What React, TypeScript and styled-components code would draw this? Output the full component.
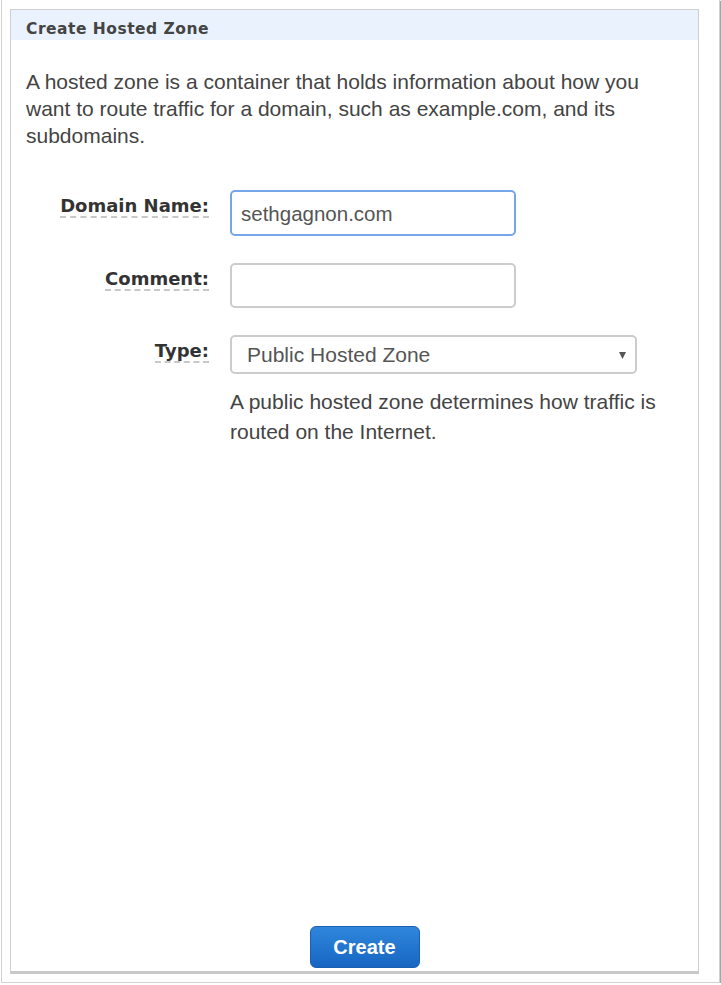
import React from "react";
import styled, { createGlobalStyle } from "styled-components";

const Global = createGlobalStyle`
  html, body {
    margin: 0;
    padding: 0;
    background: #ffffff;
  }
  body {
    font-family: "Liberation Sans", Arial, sans-serif;
    color: #444;
  }
`;

const Frame = styled.div`
  box-sizing: border-box;
  width: 719px;
  height: 983px;
  margin-left: 1px;
  padding: 9px 0 0 8px;
  background: #fff;
  border: 1px solid #d2d2d2;
  border-top: 0;
  box-shadow: 1px 1px 1px rgba(0, 0, 0, 0.35);
`;

const Panel = styled.section`
  box-sizing: border-box;
  width: 689px;
  height: 965px;
  display: flex;
  flex-direction: column;
  border: 1px solid #cfcfcf;
  border-bottom: 3px solid #c8c8c8;
  background: #fff;
`;

const Header = styled.h2`
  margin: 0;
  height: 30px;
  padding: 0 15px 2px;
  box-sizing: border-box;
  display: flex;
  align-items: flex-end;
  background: #eaf2fd;
  font-family: "DejaVu Sans", Verdana, sans-serif;
  font-size: 15.5px;
  font-weight: bold;
  color: #444;
  letter-spacing: 0.5px;
`;

const Intro = styled.p`
  margin: 28px 15px 0;
  font-size: 21px;
  line-height: 27px;
  color: #444;
`;

const Form = styled.div`
  margin-top: 41px;
  display: grid;
  grid-template-columns: 198px 1fr;
  column-gap: 21px;
  row-gap: 27px;
  align-items: start;
`;

const Label = styled.label`
  justify-self: end;
  margin-top: 6px;
  font-family: "DejaVu Sans", Verdana, sans-serif;
  font-size: 18px;
  font-weight: bold;
  line-height: 20px;
  color: #333;
  border-bottom: 2px dashed #c8c8c8;
`;

const TextInput = styled.div<{ $focused?: boolean }>`
  box-sizing: border-box;
  width: 286px;
  height: ${(p) => (p.$focused ? "46px" : "45px")};
  padding: 2px 9px 0;
  display: flex;
  align-items: center;
  border: 2px solid ${(p) => (p.$focused ? "#76a6ea" : "#cccccc")};
  border-radius: 5px;
  font-size: 20.5px;
  color: #555;
`;

const Field = styled.div`
  display: flex;
  flex-direction: column;
`;

const Select = styled.div`
  box-sizing: border-box;
  width: 407px;
  height: 39px;
  padding: 1px 9px 0 15px;
  display: flex;
  align-items: center;
  justify-content: space-between;
  border: 2px solid #cccccc;
  border-radius: 5px;
  font-size: 21px;
  color: #555;
`;

const Help = styled.p`
  margin: 13px 0 0;
  width: 440px;
  font-size: 21px;
  line-height: 30px;
  color: #444;
`;

const Footer = styled.div`
  margin-top: auto;
  display: flex;
  justify-content: center;
  padding: 0 0 3px 20px;
`;

const Button = styled.button`
  box-sizing: border-box;
  width: 110px;
  height: 42px;
  border: 1px solid #1a5fb0;
  border-radius: 6px;
  background: linear-gradient(#2f86dc, #1666c1);
  color: #fff;
  font-family: "Liberation Sans", Arial, sans-serif;
  font-size: 20px;
  font-weight: bold;
  cursor: pointer;
`;

const Caret = () => (
  <svg width="7" height="7" viewBox="0 0 7 7" aria-hidden="true">
    <polygon points="0,0 7,0 3.5,7" fill="#555" />
  </svg>
);

export default function App() {
  return (
    <>
      <Global />
      <Frame>
        <Panel>
          <Header>Create Hosted Zone</Header>
          <Intro>
            A hosted zone is a container that holds information about how you
            want to route traffic for a domain, such as example.com, and its
            subdomains.
          </Intro>
          <Form>
            <Label>Domain Name:</Label>
            <TextInput $focused>sethgagnon.com</TextInput>
            <Label>Comment:</Label>
            <TextInput />
            <Label>Type:</Label>
            <Field>
              <Select>
                Public Hosted Zone
                <Caret />
              </Select>
              <Help>
                A public hosted zone determines how traffic is routed on the
                Internet.
              </Help>
            </Field>
          </Form>
          <Footer>
            <Button>Create</Button>
          </Footer>
        </Panel>
      </Frame>
    </>
  );
}
